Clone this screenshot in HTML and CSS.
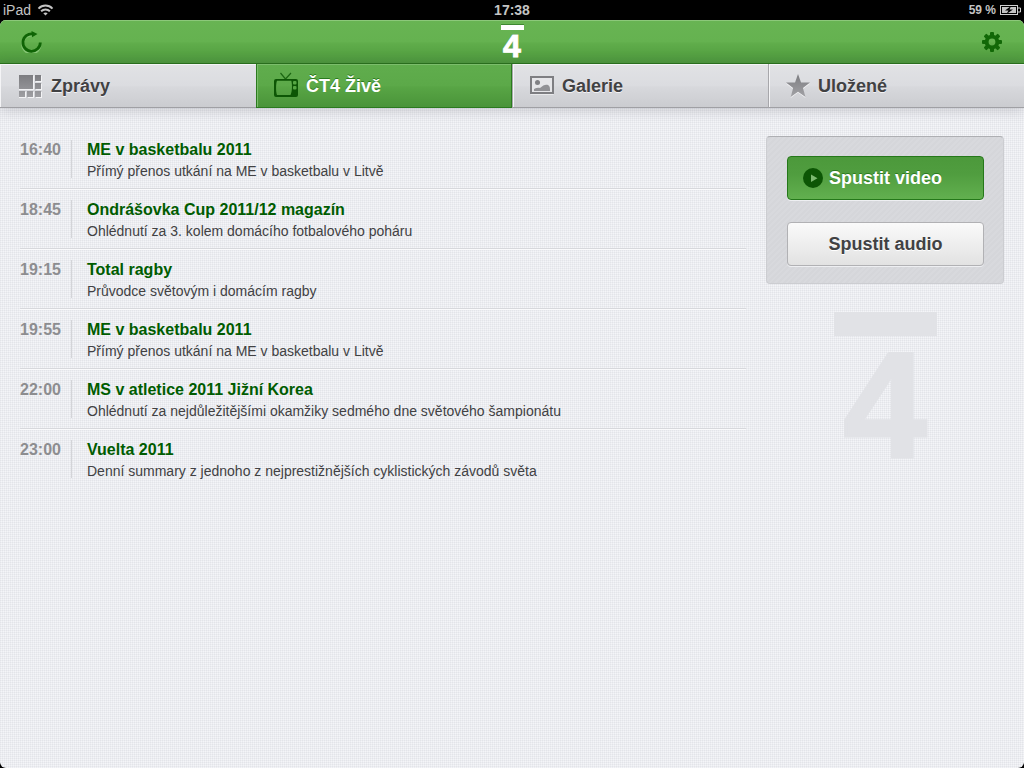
FILE: index.html
```
<!DOCTYPE html>
<html lang="cs">
<head>
  <meta charset="UTF-8">
  <meta name="viewport" content="width=device-width, initial-scale=1">
  <title>ČT4 Živě</title>
  <link rel="stylesheet" href="styles.css">
</head>
<body>

<div class="status-bar">
  <div class="status-left">
    <span>iPad</span>
    <svg width="17" height="12" viewBox="0 0 16 12" fill="none" stroke="#c4c4c4" stroke-width="2">
      <path d="M1 4.6C5 .6 11 .6 15 4.6M3.6 7.3c2.5-2.4 6.3-2.4 8.8 0"/>
      <path d="M5.8 9.2c1.3-1.1 3.1-1.1 4.4 0L8 11.5z" fill="#c4c4c4" stroke="none"/>
    </svg>
  </div>
  <div class="status-time">17:38</div>
  <div class="status-right">
    <span>59 %</span>
    <svg width="21" height="10" viewBox="0 0 21 10">
      <rect x=".5" y=".5" width="17" height="9" fill="none" stroke="#d0d0d0"/>
      <rect x="2" y="2" width="14" height="6" fill="#c4c4c4"/>
      <path d="M18 3h2.5v4H18" fill="none" stroke="#d0d0d0"/>
      <path d="M11 1L5 5.500h3.500L6.500 9 13 4.500H9.500z" fill="#000"/>
    </svg>
  </div>
</div>

<div class="app">
  <header class="toolbar">
    <button type="button" class="icon-button" aria-label="Obnovit">
      <svg width="22" height="22" viewBox="0 0 22 22">
        <path d="M19.300 11.800A9 9 0 1 1 12 3.500" transform="translate(0 1)" fill="none" stroke="#85c574" stroke-width="2.400"/>
        <path d="M19.300 11.500A8.700 8.700 0 1 1 12 3" fill="none" stroke="#0f6405" stroke-width="2.800"/>
        <path d="M10.500 0l6 3-5.500 3.200z" fill="#0f6405"/>
      </svg>
    </button>
    <h1 class="logo">4</h1>
    <button type="button" class="icon-button" aria-label="Nastavení">
      <svg width="22" height="22" viewBox="0 0 22 22">
        <g fill="#126807">
          <path fill-rule="evenodd" d="M11 3.700a7.300 7.300 0 1 0 0 14.600 7.300 7.300 0 0 0 0-14.600zm0 3.900a3.400 3.400 0 1 1 0 6.800 3.400 3.400 0 0 1 0-6.800z"/>
          <g id="teeth">
            <rect x="9" y="1" width="4" height="4.500" rx="1"/>
            <rect x="9" y="16.500" width="4" height="4.500" rx="1"/>
            <rect x="1" y="9" width="4.500" height="4" rx="1"/>
            <rect x="16.500" y="9" width="4.500" height="4" rx="1"/>
          </g>
          <use href="#teeth" transform="rotate(45 11 11)"/>
        </g>
      </svg>
    </button>
  </header>

  <nav class="tabs">
    <a href="#zpravy" class="tab">
      <svg width="24" height="24" viewBox="0 0 24 24">
        <defs>
          <linearGradient id="grey" x1="0" y1="0" x2="0" y2="24" gradientUnits="userSpaceOnUse">
            <stop offset="0" stop-color="#7b7b7f"/>
            <stop offset="1" stop-color="#a0a0a4"/>
          </linearGradient>
        </defs>
        <path d="M0 2h15v14H0zM17 2h6v6h-6zM17 10h6v6h-6zM17 18h6v6h-6zM9 18h6v6H9zM0 18h7v6H0z" fill="#f3f3f5"/>
        <path d="M0 1h14v14H0zM16 1h6v6h-6zM16 9h6v6h-6zM16 17h6v6h-6zM8 17h6v6H8zM0 17h6v6H0z" fill="url(#grey)"/>
      </svg>
      Zprávy
    </a>
    <a href="#zive" class="tab active">
      <svg width="24" height="28" viewBox="0 0 24 28">
        <path d="M6.500 1l5 6 5.500-6" fill="none" stroke="#1c6712" stroke-width="1.200"/>
        <path fill-rule="evenodd" d="M2 7h20a2 2 0 0 1 2 2v14a2 2 0 0 1-2 2H2a2 2 0 0 1-2-2V9a2 2 0 0 1 2-2zm1 1.800c-1.200 3-1.200 11 0 14.200h13.500c1.800-3 1.800-11 .8-14.200z" fill="#0d5605"/>
        <rect x="19" y="9" width="3.500" height="3.500" rx="1" fill="#56a643"/>
        <rect x="19" y="14" width="3.500" height="3.500" rx="1" fill="#56a643"/>
      </svg>
      ČT4 Živě
    </a>
    <a href="#galerie" class="tab">
      <svg width="24" height="20" viewBox="0 0 24 20">
        <rect x="1" y="2" width="22" height="16" fill="#e8e8ea" stroke="#fff"/>
        <rect x="1" y="1" width="22" height="16" fill="#e6e6e9" stroke="#7e7e82" stroke-width="2"/>
        <circle cx="7.500" cy="6.500" r="2.500" fill="#808084"/>
        <path d="M4 15v-2c2-1 4-1.500 6-1 3-3 6-4 8-3 2 1 2 3 2 6z" fill="#929296"/>
      </svg>
      Galerie
    </a>
    <a href="#ulozene" class="tab">
      <svg width="24" height="26" viewBox="0 0 25 27">
        <path d="M12.500 1l3.200 8.800H25l-7.300 5.800 2.600 9.400-7.800-5.600-7.600 5.600 2.500-9.400L0 9.800h9.400z" transform="translate(0 1)" fill="#f3f3f5"/>
        <path d="M12.500 1l3.200 8.800H25l-7.300 5.800 2.600 9.400-7.800-5.600-7.600 5.600 2.500-9.400L0 9.800h9.400z" fill="url(#grey)"/>
      </svg>
      Uložené
    </a>
  </nav>

  <main class="content">
    <ul class="programme">
      <li>
        <time>16:40</time>
        <div class="show">
          <h2>ME v basketbalu 2011</h2>
          <p>Přímý přenos utkání na ME v basketbalu v Litvě</p>
        </div>
      </li>
      <li>
        <time>18:45</time>
        <div class="show">
          <h2>Ondrášovka Cup 2011/12 magazín</h2>
          <p>Ohlédnutí za 3. kolem domácího fotbalového poháru</p>
        </div>
      </li>
      <li>
        <time>19:15</time>
        <div class="show">
          <h2>Total ragby</h2>
          <p>Průvodce světovým i domácím ragby</p>
        </div>
      </li>
      <li>
        <time>19:55</time>
        <div class="show">
          <h2>ME v basketbalu 2011</h2>
          <p>Přímý přenos utkání na ME v basketbalu v Litvě</p>
        </div>
      </li>
      <li>
        <time>22:00</time>
        <div class="show">
          <h2>MS v atletice 2011 Jižní Korea</h2>
          <p>Ohlédnutí za nejdůležitějšími okamžiky sedmého dne světového šampionátu</p>
        </div>
      </li>
      <li>
        <time>23:00</time>
        <div class="show">
          <h2>Vuelta 2011</h2>
          <p>Denní summary z jednoho z nejprestižnějších cyklistických závodů světa</p>
        </div>
      </li>
    </ul>

    <aside class="sidebar">
      <div class="player-box">
        <button type="button" class="play-button video">
          <svg width="20" height="20" viewBox="0 0 20 20">
            <circle cx="10" cy="10" r="10" fill="#0d5605"/>
            <path d="M8 6.500l6.500 3.800L8 14z" fill="#7cb970"/>
          </svg>
          Spustit video
        </button>
        <button type="button" class="play-button audio">Spustit audio</button>
      </div>
      <div class="watermark">4</div>
    </aside>
  </main>
</div>

</body>
</html>
```
FILE: styles.css
```
:root {
  --green-dark: #005c00;
  --green-border: #2b7a1e;
  --text: #414143;
  --muted: #8d8d90;
  --mark: #e1e2e6;
}

* {
  box-sizing: border-box;
}

body {
  margin: 0;
  min-height: 100vh;
  display: flex;
  flex-direction: column;
  background: #000;
  font-family: "Liberation Sans", Arial, Helvetica, sans-serif;
  color: var(--text);
}

h1, h2, p, ul {
  margin: 0;
  padding: 0;
}

svg {
  display: block;
  flex: none;
}

/* Status bar */
.status-bar {
  display: grid;
  grid-template-columns: 1fr auto 1fr;
  align-items: center;
  height: 20px;
  padding: 0 3px;
  background: #000;
  color: #c4c4c4;
  font-size: 14px;
  line-height: 18px;
}

.status-left,
.status-right {
  display: flex;
  align-items: center;
  gap: 6px;
}

.status-right {
  justify-content: flex-end;
  gap: 4px;
}

.status-time,
.status-right span {
  font-weight: bold;
}

.status-right span {
  font-size: 12px;
}

.app {
  flex: 1;
  border-radius: 6px;
  overflow: hidden;
  background-color: #f4f5f8;
  background-image:
    repeating-linear-gradient(to right, rgba(80, 85, 105, 0.05) 0 1px, transparent 1px 2px),
    repeating-linear-gradient(to bottom, rgba(80, 85, 105, 0.05) 0 1px, transparent 1px 2px);
}

/* Toolbar */
.toolbar {
  display: flex;
  align-items: center;
  justify-content: space-between;
  height: 44px;
  padding: 0 21px;
  background: linear-gradient(#68b453, #65b250 50%, #60ad4b 54%, #4d993c);
  border-bottom: 1px solid #287319;
  box-shadow: inset 0 1px #8cc87a;
}

.icon-button {
  display: block;
  padding: 0;
  border: 0;
  background: none;
}

.logo {
  padding-top: 2px;
  color: #fff;
  font-size: 32px;
  line-height: 30px;
  text-align: center;
  text-shadow: 0 -1px rgba(0, 70, 0, 0.5);
  -webkit-text-stroke: 1px #fff;
}

.logo::before {
  content: "";
  display: block;
  width: 23px;
  height: 5px;
  margin-bottom: 1px;
  background: #fff;
  box-shadow: 0 -1px rgba(0, 70, 0, 0.4);
}

/* Tabs */
.tabs {
  display: grid;
  grid-template-columns: repeat(4, 1fr);
  height: 44px;
  box-shadow: 0 1px 14px rgba(60, 60, 75, 0.25);
}

.tab {
  display: flex;
  align-items: center;
  gap: 8px;
  padding: 1px 0 0 17px;
  background: linear-gradient(#e1e2e5, #dbdce0 50%, #d7d8dc 54%, #cbccd0);
  border-left: 1px solid #a7a7ab;
  border-bottom: 1px solid #a0a0a4;
  box-shadow: inset 1px 1px #f4f4f6;
  color: var(--text);
  font-size: 18px;
  font-weight: bold;
  text-decoration: none;
  text-shadow: 0 1px #f3f3f5;
}

.tab:first-child {
  padding-left: 19px;
  border-left: 0;
}

.tab.active {
  background: linear-gradient(#60ad4d, #5ca949 50%, #58a545 54%, #4a9439);
  border: 1px solid var(--green-border);
  border-top: 0;
  box-shadow: inset 1px 1px #7cbd6c;
  color: #fff;
  text-shadow: 0 -1px #2b7a1e;
}

/* Programme list */
.content {
  display: flex;
  align-items: flex-start;
  gap: 20px;
  padding: 28px 20px;
}

.programme {
  flex: 1;
  list-style: none;
}

.programme li {
  display: flex;
  height: 60px;
  padding-top: 11px;
  border-top: 1px solid #d7d8dc;
  box-shadow: inset 0 1px #fafafc;
}

.programme li:first-child {
  height: 52px;
  padding-top: 4px;
  border-top: 0;
  box-shadow: none;
}

.programme time {
  width: 51px;
  color: var(--muted);
  font-size: 16px;
  font-weight: bold;
  line-height: 20px;
}

.show {
  height: 38px;
  padding-left: 15px;
  border-left: 1px solid #d3d4d8;
}

.show h2 {
  color: var(--green-dark);
  font-size: 16px;
  line-height: 20px;
}

.show p {
  font-size: 14px;
  line-height: 22px;
}

/* Player box */
.sidebar {
  width: 238px;
}

.player-box {
  display: flex;
  flex-direction: column;
  gap: 22px;
  padding: 19px 19px 17px 20px;
  background: repeating-linear-gradient(135deg, #d8d9dd 0 2px, #d5d6da 2px 4px);
  border: 1px solid #cccdd1;
  border-top-color: #aeafb3;
  border-radius: 4px;
}

.play-button {
  display: flex;
  align-items: center;
  justify-content: center;
  height: 44px;
  padding: 0 15px;
  border-radius: 4px;
  font-family: inherit;
  font-size: 18px;
  font-weight: bold;
}

.play-button.video {
  justify-content: flex-start;
  gap: 6px;
  background: linear-gradient(#4c993b, #509d3f 40%, #62b04f);
  border: 1px solid #25781a;
  box-shadow: 0 1px #eeeff2;
  color: #fff;
  text-shadow: 0 -1px #2b7a1e;
}

.play-button.audio {
  background: linear-gradient(#fafafa, #e2e2e2);
  border: 1px solid #b1b1b4;
  box-shadow: 0 1px #eeeff2;
  color: var(--text);
  text-shadow: 0 1px #fff;
}

/* Channel mark under the player */
.watermark {
  margin-top: 28px;
  color: var(--mark);
  font-size: 150px;
  font-weight: bold;
  line-height: 150px;
  text-align: center;
  -webkit-text-stroke: 3px var(--mark);
}

.watermark::before {
  content: "";
  display: block;
  width: 103px;
  height: 24px;
  margin: 0 auto -6px;
  background: var(--mark);
}
```
